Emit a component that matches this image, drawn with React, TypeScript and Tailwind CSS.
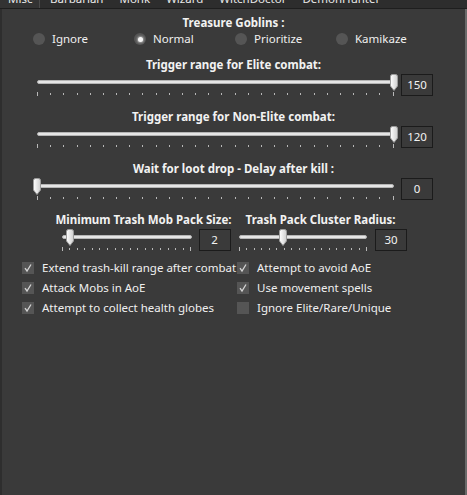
import React from "react";

const FONT = { fontFamily: '"Noto Sans", "Open Sans", sans-serif' };

function Thumb() {
  return (
    <svg width="10" height="18" viewBox="0 0 10 18" className="block">
      <defs>
        <linearGradient id="tg" x1="0" x2="1" y1="0" y2="0">
          <stop offset="0" stopColor="#ffffff" />
          <stop offset="1" stopColor="#cfcfcf" />
        </linearGradient>
      </defs>
      <path d="M1.5 2.5 Q1.5 0.5 3.5 0.5 H6.5 Q8.5 0.5 8.5 2.5 V12 L5 16.5 L1.5 12 Z" fill="url(#tg)" stroke="#9c9c9c" strokeWidth="1" />
    </svg>
  );
}

function Slider({ width, frac, ticks }: { width: number; frac: number; ticks: number }) {
  const arr = Array.from({ length: ticks }, (_, i) => i);
  return (
    <div className="flex flex-col px-[5px]" style={{ width: width + 10 }}>
      <div className="relative h-[18px]">
        <div className="mt-[6px] h-[4px] rounded-full bg-[#e6e6e6] border border-[#b5b5b5]" />
        <div className="absolute top-0" style={{ left: `calc(${frac * 100}% - 5px)` }}>
          <Thumb />
        </div>
      </div>
      <div className="flex justify-between h-[4px]">
        {arr.map((i) => (
          <div
            key={i}
            className={
              i === 0 || i === ticks - 1
                ? "w-[1px] h-[4px] bg-[#b8b8b8]"
                : "w-[1px] h-[2px] mt-[1px] bg-[#b8b8b8]"
            }
          />
        ))}
      </div>
    </div>
  );
}

function ValueBox({ v, w = 32 }: { v: string; w?: number }) {
  return (
    <div
      className="h-[22px] border border-[#1b1b1b] flex items-center justify-center text-[11.5px] text-[#f2f2f2]"
      style={{ width: w }}
    >
      {v}
    </div>
  );
}

function Radio({ label, checked }: { label: string; checked?: boolean }) {
  return (
    <div className="flex items-center gap-[7px] w-[101px]">
      <div className="w-[12px] h-[12px] rounded-full bg-[#555555] flex items-center justify-center">
        {checked && <div className="w-[5px] h-[5px] rounded-full bg-[#f5f5f5] shadow-[0_0_2px_1px_rgba(255,255,255,0.45)]" />}
      </div>
      <span className="text-[11.5px] text-[#f0f0f0] leading-[16px]">{label}</span>
    </div>
  );
}

function Check({ label, checked }: { label: string; checked?: boolean }) {
  return (
    <div className="flex items-center gap-[8px] h-[20px]">
      <div className="w-[12px] h-[12px] bg-[#555555] flex items-center justify-center">
        {checked && (
          <svg width="10" height="10" viewBox="0 0 10 10">
            <path d="M2 5.2 L4 8 L8 1.5" fill="none" stroke="#d4d4d4" strokeWidth="1.3" />
          </svg>
        )}
      </div>
      <span className="text-[11.5px] text-[#f0f0f0] leading-[16px] whitespace-nowrap">{label}</span>
    </div>
  );
}

function Header({ children }: { children: React.ReactNode }) {
  return <div className="text-[11.5px] font-bold text-[#f2f2f2] leading-[16px] text-center whitespace-nowrap">{children}</div>;
}

export default function App() {
  const tabs = ["Barbarian", "Monk", "Wizard", "WitchDoctor", "DemonHunter"];
  return (
    <div className="w-[467px] h-[495px] bg-[#3a3a3a] flex flex-col overflow-hidden" style={FONT}>
      <div className="h-[8px] overflow-hidden bg-[#2d2d2d] flex">
        <div className="w-[40px] border-r border-[#4a4a4a] bg-[#333333] text-[11.5px] leading-[16px] mt-[-9px] pl-[8px] text-[#e8e8e8]">Misc</div>
        <div className="flex mt-[-9px] text-[11.5px] leading-[16px] text-[#e8e8e8] pl-[2px]">
          {tabs.map((t) => (
            <div key={t} className="px-[8px]">{t}</div>
          ))}
        </div>
      </div>
      <div className="h-[1px] bg-[#1e1e1e]" />
      <div className="flex-1 flex flex-col border-l-[2px] border-l-[#2e2e2e] border-r-[2px] border-r-[#6a6a6a]">
        <div className="pt-[6px]">
          <Header>Treasure Goblins :</Header>
        </div>
        <div className="flex pl-[31px]">
          <Radio label="Ignore" />
          <Radio label="Normal" checked />
          <Radio label="Prioritize" />
          <Radio label="Kamikaze" />
        </div>

        <div className="mt-[10px]">
          <Header>Trigger range for Elite combat:</Header>
        </div>
        <div className="flex gap-[2px] pl-[30px] mt-[1px]">
          <Slider width={357} frac={1} ticks={28} />
          <ValueBox v="150" />
        </div>

        <div className="mt-[13px]">
          <Header>Trigger range for Non-Elite combat:</Header>
        </div>
        <div className="flex gap-[2px] pl-[30px] mt-[1px]">
          <Slider width={357} frac={1} ticks={28} />
          <ValueBox v="120" />
        </div>

        <div className="mt-[13px]">
          <Header>Wait for loot drop - Delay after kill :</Header>
        </div>
        <div className="flex gap-[2px] pl-[30px] mt-[1px]">
          <Slider width={357} frac={0} ticks={28} />
          <ValueBox v="0" />
        </div>

        <div className="flex pl-[55px] gap-[4px] mt-[12px]">
          <div className="flex flex-col items-center w-[173px]">
            <Header>Minimum Trash Mob Pack Size:</Header>
            <div className="flex gap-[2px] mt-[1px]">
              <Slider width={130} frac={0.065} ticks={18} />
              <ValueBox v="2" />
            </div>
          </div>
          <div className="flex flex-col items-center w-[173px]">
            <Header>Trash Pack Cluster Radius:</Header>
            <div className="flex gap-[3px] mt-[1px]">
              <Slider width={128} frac={0.34} ticks={18} />
              <ValueBox v="30" />
            </div>
          </div>
        </div>

        <div className="grid grid-cols-[215px_1fr] pl-[20px] mt-[7px]">
          <Check label="Extend trash-kill range after combat" checked />
          <Check label="Attempt to avoid AoE" checked />
          <Check label="Attack Mobs in AoE" checked />
          <Check label="Use movement spells" checked />
          <Check label="Attempt to collect health globes" checked />
          <Check label="Ignore Elite/Rare/Unique" />
        </div>
      </div>
    </div>
  );
}
